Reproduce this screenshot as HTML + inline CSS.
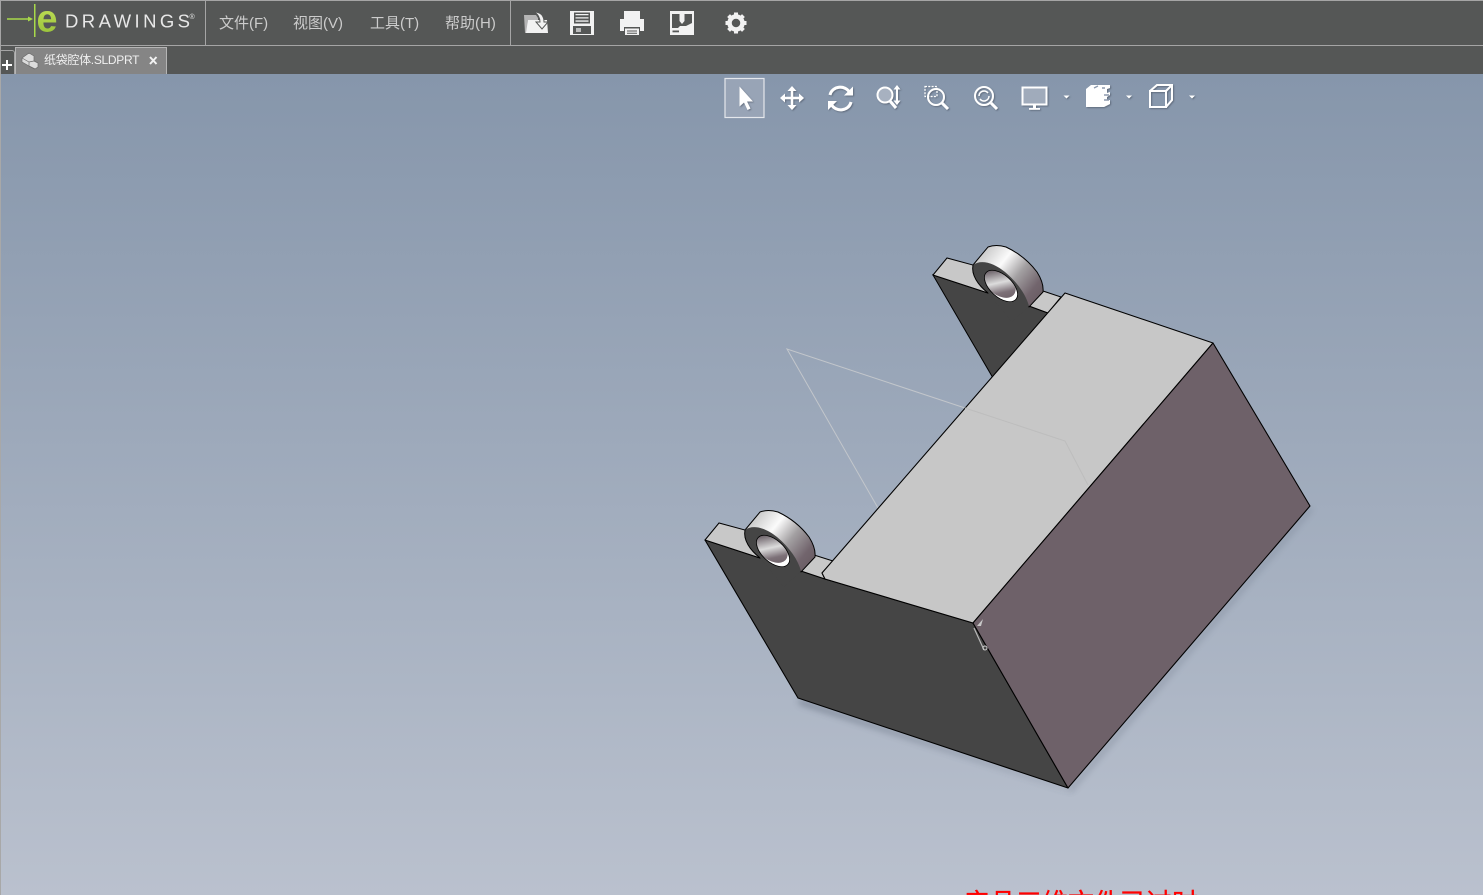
<!DOCTYPE html>
<html lang="zh"><head><meta charset="utf-8"><title>eDrawings</title>
<style>
html,body{margin:0;padding:0;width:1483px;height:895px;overflow:hidden;background:#8696ab}
body{position:relative;font-family:"Liberation Sans","Noto Sans CJK SC",sans-serif}
.abs{position:absolute;white-space:nowrap}
#view{position:absolute;left:0;top:74px;width:1483px;height:821px;background:linear-gradient(#8696ab,#bac1ce);border-left:1px solid #a8a8a8;box-sizing:border-box;overflow:hidden}
#bar{position:absolute;left:0;top:0;width:1483px;height:74px;background:#555756}
.m{font-size:15px;color:#cccccc;top:14px;line-height:20px}
svg{position:absolute;left:0;top:0}
</style></head><body>
<div id="view"></div>
<div id="bar"></div>
<div class="abs" style="left:0;top:0;width:1483px;height:1px;background:#a5a5a5"></div>
<div class="abs" style="left:0;top:45px;width:1483px;height:1px;background:#a5a5a5"></div>
<div class="abs" style="left:205px;top:1px;width:1px;height:44px;background:#a5a5a5"></div>
<div class="abs" style="left:510px;top:1px;width:1px;height:44px;background:#a5a5a5"></div>
<div class="abs" style="left:0;top:1px;width:1px;height:73px;background:#a5a5a5"></div>

<div class="abs m" style="left:219px">文件(F)</div>
<div class="abs m" style="left:293px">视图(V)</div>
<div class="abs m" style="left:370px">工具(T)</div>
<div class="abs m" style="left:445px">帮助(H)</div>

<div class="abs" style="left:1px;top:50px;width:14px;height:24px;border-top:1px solid #a5a5a5;border-right:1px solid #a5a5a5;border-radius:0 3px 0 0;box-sizing:border-box"></div>
<div class="abs" style="left:15px;top:47px;width:152px;height:27px;background:#858585;border:1px solid #b5b5b5;border-bottom:0;box-sizing:border-box"></div>
<div class="abs" style="left:44px;top:53px;font-size:12px;line-height:15px;color:#f0f0f0;letter-spacing:-.3px">纸袋腔体.SLDPRT</div>

<svg width="1483" height="895" viewBox="0 0 1483 895" xmlns="http://www.w3.org/2000/svg">
<defs>
<linearGradient id="eg" x1="0" y1="0" x2="0" y2="1"><stop offset="0" stop-color="#cbe85e"/><stop offset="1" stop-color="#90bb34"/></linearGradient>
<linearGradient id="cyl" gradientUnits="userSpaceOnUse" x1="978" y1="254" x2="1037" y2="302">
<stop offset="0" stop-color="#c4c4c4"/><stop offset=".32" stop-color="#fbfbfb"/><stop offset=".58" stop-color="#a3a0a2"/><stop offset=".85" stop-color="#72656d"/><stop offset="1" stop-color="#6a5d64"/></linearGradient>
<linearGradient id="hole" gradientUnits="userSpaceOnUse" x1="987" y1="276" x2="1015" y2="296">
<stop offset="0" stop-color="#6b6168"/><stop offset=".4" stop-color="#dcdcdc"/><stop offset=".7" stop-color="#7d7178"/><stop offset="1" stop-color="#6a5d64"/></linearGradient>
<clipPath id="hc"><ellipse cx="1001" cy="286" rx="20" ry="11" transform="rotate(42 1001 286)"/></clipPath>
<filter id="blur" x="-10%" y="-10%" width="120%" height="120%"><feGaussianBlur stdDeviation="3.500"/></filter>
<filter id="sh" x="-30%" y="-30%" width="160%" height="160%"><feDropShadow dx="1" dy="1" stdDeviation=".8" flood-color="#3c4656" flood-opacity=".55"/></filter>
<g id="lug">
<path d="M973 265L988 247Q996 244 1006 247Q1025 256 1037 272Q1044 283 1043 292L1029 307L990 275z" fill="url(#cyl)" stroke="#000" stroke-width="1"/>
<path d="M973 265C981 259 994 263 1005 272C1018 283 1026 295 1029 306L1012 322L988 293C978 285 971 275 973 265z" fill="#454545"/>
<path d="M988 293C978 285 971 275 973 265" fill="none" stroke="#000" stroke-width="1"/>
<g clip-path="url(#hc)">
<rect x="975" y="265" width="55" height="45" fill="#fff"/>
<ellipse cx="998" cy="281" rx="21" ry="12.500" transform="rotate(42 998 281)" fill="url(#hole)"/>
</g>
<ellipse cx="1001" cy="286" rx="20" ry="11" transform="rotate(42 1001 286)" fill="none" stroke="#000" stroke-width=".8"/>
</g>
</defs>

<!-- logo -->
<path d="M7 19H29" stroke="#a8d94a" stroke-width="1.500"/><path d="M28 16.500l5 2.500-5 2.500z" fill="#a8d94a"/>
<rect x="34" y="4" width="1.500" height="33" fill="#a8d94a"/>
<text x="36.500" y="31.500" font-family="Liberation Sans" font-weight="700" font-size="38" fill="url(#eg)" textLength="21" lengthAdjust="spacingAndGlyphs">e</text>
<text x="65" y="27.500" font-family="Liberation Sans" font-size="18.500" fill="#e8e8e8" textLength="125" lengthAdjust="spacing">DRAWINGS</text>
<text x="189.500" y="19" font-family="Liberation Sans" font-size="7" fill="#e8e8e8">®</text>

<!-- tab icons -->
<path d="M2 65h10M7 60v10" stroke="#fff" stroke-width="2"/>
<g fill="#dcdcdc" stroke="#6a6a6a" stroke-width=".7" stroke-linejoin="round"><path d="M22 58l7-5 5 3v5l4 2v4l-3 2-6-3-7-4z"/><path d="M22 58l7 4 5-1M29 62v4l6 3M29 53v1"/></g>
<path d="M150 57l6.500 7M156.500 57l-6.500 7" stroke="#f2f2f2" stroke-width="2"/>

<!-- main toolbar -->
<path d="M524 15h12l2 3v2H528l-1 13h-2z" fill="#b5b5b5"/>
<path d="M528 20h19l1 13H526z" fill="#f2f2f2"/>
<path d="M534 12C541 12 544 16 544 22h4l-6 7-6-7h4C540 18 538 14 534 12z" fill="#f2f2f2" stroke="#555756" stroke-width="1"/>
<g fill="#f2f2f2">
<path fill-rule="evenodd" d="M570 11h24v24h-24z M574 12.500v11h16v-11z M573 26v8h18v-8z"/>
<path d="M575.500 14h13v1.300h-13zM575.500 17.200h13v1.300h-13zM575.500 20.400h13v1.300h-13z"/><rect x="576" y="28" width="5" height="4" fill="#bbb"/>
<path fill-rule="evenodd" d="M624 11h16v8h-16z M620 19h24v12h-4v-4h-16v4h-4z"/>
<path d="M625 28.500h14v6.500h-14z"/><path d="M627 30.500h10v1h-10zM627 32.800h10v1h-10z" fill="#555756"/>
<rect x="670" y="11" width="24" height="24"/>
</g>
<path d="M672 14h7.500v7l2.500 3 2.500-3v-7h7.500v9l-6 3h-6l-2 2h-6z" fill="#555756"/>
<rect x="672.500" y="30.500" width="6.500" height="1.800" fill="#555756"/>
<g transform="translate(736,23)" fill="#f2f2f2">
<circle r="6.500" fill="none" stroke="#f2f2f2" stroke-width="4.500"/>
<rect x="-2" y="-10.500" width="4" height="4"/><rect x="-2" y="6.500" width="4" height="4"/><rect x="-10.500" y="-2" width="4" height="4"/><rect x="6.500" y="-2" width="4" height="4"/>
<g transform="rotate(45)"><rect x="-2" y="-10.500" width="4" height="4"/><rect x="-2" y="6.500" width="4" height="4"/><rect x="-10.500" y="-2" width="4" height="4"/><rect x="6.500" y="-2" width="4" height="4"/></g>
</g>

<!-- view toolbar -->
<rect x="725" y="78.500" width="39" height="39" fill="#98a4b6" stroke="#e4e7ec" stroke-width="1.200"/>
<g filter="url(#sh)">
<path d="M739.500 86.500v20l4.500-4 3.500 7.500 3-1.500-3.500-7h6z" fill="#fff"/>
<g fill="none" stroke="#fff" stroke-width="2.400"><path d="M792 90v16M784 98h16"/></g>
<g fill="#fff"><path d="M792 86l-4.500 5h9zM792 110l-4.500-5h9zM780 98l5-4.500v9zM804 98l-5-4.500v9z"/></g>
<path d="M830 95c2-9 15-11 20-2M851 102c-2 9-15 11-20 2" fill="none" stroke="#fff" stroke-width="3"/>
<path d="M853 86.500v9h-9zM828 110v-9h9z" fill="#fff"/>
<circle cx="885" cy="95" r="7.500" fill="#a7b1c0" stroke="#fff" stroke-width="2"/><path d="M890 101l6 7" stroke="#fff" stroke-width="3"/>
<path d="M897 89v12" stroke="#fff" stroke-width="2"/><path d="M897 85l-3.500 4.500h7zM897 105l-3.500-4.500h7z" fill="#fff"/>
<rect x="925" y="86.500" width="12" height="10" fill="none" stroke="#fff" stroke-width="1.200" stroke-dasharray="2 1.300"/>
<circle cx="936" cy="97" r="8" fill="none" stroke="#fff" stroke-width="2"/><path d="M942 103l6 6" stroke="#fff" stroke-width="3"/>
<circle cx="984" cy="96" r="9" fill="none" stroke="#fff" stroke-width="2"/><path d="M991 103l6 6" stroke="#fff" stroke-width="3"/>
<path d="M979 96a5 5 0 0 1 9-3M989 96a5 5 0 0 1-9 3" fill="none" stroke="#fff" stroke-width="1.500"/>
<rect x="1022.500" y="87.500" width="24" height="17" fill="#a0abbb" stroke="#fff" stroke-width="2"/><path d="M1033 105h3v3h-3zM1029 108h11v1.800h-11z" fill="#fff"/>
<path d="M1063.500 95.500h6l-3 3z" fill="#fff"/>
<path d="M1091 85h19v3l-3 1v4l3-1v3l-3 2v3l3 0v4l-6 3h-18v-18z" fill="#fff"/>
<path d="M1094 88l4-2M1105 88h-3M1104 95h5M1104 100h5" stroke="#8d9aae" stroke-width="1.400"/>
<path d="M1126 95.500h6l-3 3z" fill="#fff"/>
<path d="M1150 91h16v16h-16zM1150 91l7-6h15v15l-6 7M1166 91l6-6" fill="none" stroke="#fff" stroke-width="2"/>
<path d="M1189 95.500h6l-3 3z" fill="#fff"/>
</g>

<!-- shadows -->
<path d="M798 699L1068 789L1075 792L800 704z" fill="#4c5566" opacity=".6" filter="url(#blur)"/>
<path d="M1068 789L1310 507L1312 510L1072 791z" fill="#4c5566" opacity=".3" filter="url(#blur)"/>

<!-- faint sketch -->
<path d="M878 508L787 349L965 408" fill="none" stroke="#c2c6cb" stroke-width="1"/>

<!-- upper lug -->
<path d="M933 275L993 378L1048 313L1029 306L988 293z" fill="#454545" stroke="#000" stroke-width="1"/>
<path d="M933 275L947 258L973 265L988 293z" fill="#c8c8c8" stroke="#000" stroke-width="1"/>
<path d="M1043 291L1061 297L1048 313L1029 306z" fill="#c8c8c8" stroke="#000" stroke-width="1"/>
<use href="#lug"/>

<!-- lower plate, tabs -->
<path d="M705 540L798 698L1068 788L973 623L825 579L801 571L760 558z" fill="#454545" stroke="#000" stroke-width="1.100" stroke-linejoin="round"/>
<path d="M705 540L719 523L745 530L760 558z" fill="#c8c8c8" stroke="#000" stroke-width="1"/>
<path d="M814 555L833 561L822 573L825 579L801 571z" fill="#c8c8c8" stroke="#000" stroke-width="1"/>
<g transform="translate(-228,265)"><use href="#lug"/></g>

<!-- top face -->
<path d="M822 573L1065 293L1213 343L973 623L825 579z" fill="#c7c7c7" stroke="#000" stroke-width="1.100" stroke-linejoin="round"/>
<path d="M965 408L1065 441L1088 485" fill="none" stroke="#bdbdbd" stroke-width="1"/>
<!-- right face -->
<path d="M1213 343L1310 506L1068 788L973 623z" fill="#6e6169" stroke="#000" stroke-width="1.100" stroke-linejoin="round"/>
<path d="M974 628L984 650" stroke="#b8b8b8" stroke-width="1.200"/>
<path d="M977 626l6-7-2 7z" fill="#c8c8c8"/>
<circle cx="985" cy="648" r="2" fill="none" stroke="#cfcfcf" stroke-width="1"/>
</svg>

<div class="abs" style="left:964px;top:884px;font-size:26px;line-height:36px;color:#f00;font-family:'Noto Sans CJK SC',sans-serif;-webkit-text-stroke:.3px #f00">产品三维文件已过时</div>
</body></html>
